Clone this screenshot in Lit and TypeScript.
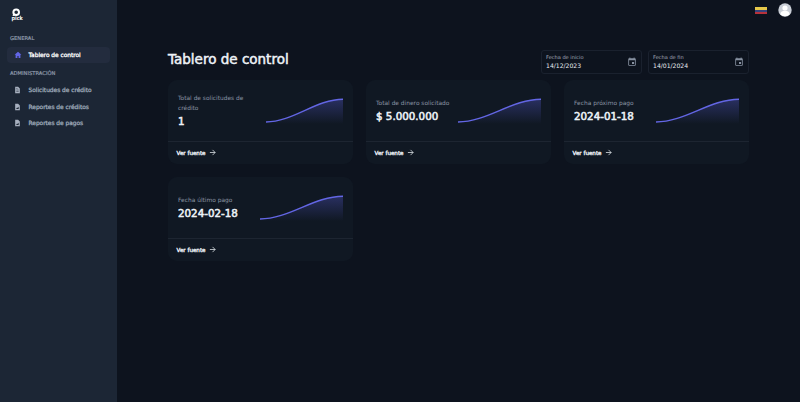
import { LitElement, html, css, svg } from "lit";
import { customElement, property } from "lit/decorators.js";

type Icon = "home" | "doc" | "report";

const icons = {
  home: svg`<path d="M12 2.200 1.800 11.600h3V21h5.400v-6.200h3.600V21h5.400v-9.400h3z"/>`,
  doc: svg`<path fill-rule="evenodd" d="M4 1h10l6 6v16H4zM8 11v2h8v-2zm0 5v2h8v-2zM8 6v2h4V6z"/>`,
  report: svg`<path fill-rule="evenodd" d="M4 1h10l6 6v16H4zM8 19h8v-8l-4 4-1.500-1L8 17z"/>`,
};

@customElement("nav-item")
export class NavItem extends LitElement {
  @property() label = "";
  @property() icon: Icon = "doc";
  @property({ type: Boolean, reflect: true }) active = false;

  static styles = css`
    :host {
      display: flex;
      align-items: center;
      box-sizing: border-box;
      height: 16px;
      padding-left: 7px;
      border-radius: 4px;
      font-size: 5.850px;
      -webkit-text-stroke: 0.300px currentColor;
      color: #9ba6b6;
    }
    :host([active]) { background: #232c3e; color: #fff; }
    svg { width: 7px; height: 8px; margin-right: 7.500px; fill: #a7b0bf; }
    :host([active]) svg { width: 8px; margin-right: 6.500px; fill: #6366e8; }
    span { white-space: nowrap; }
  `;

  render() {
    return html`<svg viewBox="0 0 24 24">${icons[this.icon]}</svg><span>${this.label}</span>`;
  }
}

@customElement("date-field")
export class DateField extends LitElement {
  @property() label = "";
  @property() value = "";

  static styles = css`
    :host {
      display: flex;
      justify-content: space-between;
      align-items: center;
      box-sizing: border-box;
      width: 101px;
      height: 24px;
      padding: 0 4px;
      border: 1px solid #1a212e;
      border-radius: 3px;
    }
    .text { padding-bottom: 2px; }
    .label { font-size: 5.050px; line-height: 8px; color: #a3acba; }
    .value { font-size: 6.100px; line-height: 9px; color: #e6eaf0; }
    svg { width: 10px; height: 10px; fill: #8791a1; }
  `;

  render() {
    return html`
      <div class="text">
        <div class="label">${this.label}</div>
        <div class="value">${this.value}</div>
      </div>
      <svg viewBox="0 0 24 24">
        <path d="M17 12h-5v5h5zM16 1v2H8V1H6v2H5c-1.100 0-2 .9-2 2v14c0 1.100.9 2 2 2h14c1.100 0 2-.9 2-2V5c0-1.100-.9-2-2-2h-1V1zm3 18H5V8h14z" />
      </svg>
    `;
  }
}

@customElement("stat-card")
export class StatCard extends LitElement {
  @property() label = "";
  @property() value = "";
  @property({ type: Number }) chart = 83;

  static styles = css`
    :host {
      display: flex;
      flex-direction: column;
      box-sizing: border-box;
      height: 84px;
      border-radius: 9px;
      background: #101823;
    }
    .body {
      display: flex;
      align-items: center;
      justify-content: space-between;
      height: 61px;
      padding: 0 10px;
    }
    .text { flex: none; max-width: 76px; padding-top: 2px; }
    .label { font-size: 5.900px; line-height: 9.300px; color: #8b95a4; }
    .value {
      margin-top: 1px;
      font-size: 10.300px;
      line-height: 15px;
      -webkit-text-stroke: 0.550px currentColor;
      color: #edf2f7;
      white-space: nowrap;
    }
    .chart { height: 26px; flex: none; }
    .foot {
      display: flex;
      align-items: center;
      flex: 1;
      padding: 0 0 1px 8.500px;
      border-top: 1px solid #1d2531;
      font-size: 5.600px;
      -webkit-text-stroke: 0.350px currentColor;
      color: #edf2f7;
    }
    .foot svg { width: 7px; height: 7px; margin-left: 3.500px; fill: none; stroke: #edf2f7; stroke-width: 2.500; }
  `;

  render() {
    return html`
      <div class="body">
        <div class="text">
          <div class="label">${this.label}</div>
          <div class="value">${this.value}</div>
        </div>
        <svg class="chart" style="width:${this.chart}px" viewBox="0 0 83 26" preserveAspectRatio="none">
          <defs>
            <linearGradient id="fill" x1="0" y1="0" x2="0" y2="1">
              <stop offset="0" stop-color="#6366f1" stop-opacity=".3" />
              <stop offset="1" stop-color="#6366f1" stop-opacity="0" />
            </linearGradient>
          </defs>
          <path d="M0 24C29 24 54 1.200 83 1.200V26H0z" fill="url(#fill)" />
          <path d="M0 24C29 24 54 1.200 83 1.200" fill="none" stroke="#6366e4" stroke-width="1.400" />
        </svg>
      </div>
      <div class="foot">
        <span>Ver fuente</span>
        <svg viewBox="0 0 24 24"><path d="M3 12h18M12 3l9 9-9 9" /></svg>
      </div>
    `;
  }
}

@customElement("app-root")
export class AppRoot extends LitElement {
  static styles = css`
    :host {
      display: flex;
      height: 402px;
      overflow: hidden;
      background: #0d131e;
      font-family: "DejaVu Sans", sans-serif;
    }
    .side {
      box-sizing: border-box;
      width: 117px;
      flex: none;
      padding: 7px 7px 0;
      background: #1c2635;
    }
    .logo { display: block; width: 17px; height: 16px; margin-left: 1px; }
    .heading {
      padding-left: 3px;
      font-size: 5.200px;
      line-height: 8px;
      -webkit-text-stroke: 0.200px currentColor;
      color: #8d98a9;
    }
    .general { margin: 11px 0 5px; }
    .admin { margin: 6px 0 5px; }
    .items { display: grid; gap: 0.700px; }
    .main { flex: 1; display: flex; flex-direction: column; }
    .top {
      display: flex;
      justify-content: flex-end;
      align-items: center;
      gap: 11px;
      height: 20px;
      padding-right: 8px;
    }
    .flag { width: 12px; height: 7px; background: linear-gradient(#e6c84a 50%, #35427c 50% 68%, #b7323b 68%); }
    .avatar { width: 14px; height: 14px; }
    .content { width: 581px; margin: 30px 0 0 51px; }
    .title-row { display: flex; justify-content: space-between; }
    h1 {
      margin: 0;
      font-size: 13.500px;
      line-height: 18px;
      font-weight: 400;
      -webkit-text-stroke: 0.500px currentColor;
      color: #edf2f7;
      white-space: nowrap;
    }
    .dates { display: flex; gap: 6px; }
    .cards { display: grid; grid-template-columns: repeat(3, 185px); gap: 13px; margin-top: 6px; }
  `;

  render() {
    return html`
      <nav class="side">
        <svg class="logo" viewBox="0 0 17 16">
          <circle cx="8.200" cy="5.300" r="2.800" fill="none" stroke="#fff" stroke-width="2" />
          <path d="M5.200 6.500 4.600 9l2.600-.2" fill="#fff" />
          <text x="3.500" y="13" font-size="5.500" font-weight="700" fill="#fff" textLength="11.300" lengthAdjust="spacingAndGlyphs">pick</text>
        </svg>
        <div class="heading general">GENERAL</div>
        <nav-item icon="home" label="Tablero de control" active></nav-item>
        <div class="heading admin">ADMINISTRACIÓN</div>
        <div class="items">
          <nav-item icon="doc" label="Solicitudes de crédito"></nav-item>
          <nav-item icon="report" label="Reportes de créditos"></nav-item>
          <nav-item icon="report" label="Reportes de pagos"></nav-item>
        </div>
      </nav>
      <div class="main">
        <div class="top">
          <div class="flag"></div>
          <svg class="avatar" viewBox="0 0 14 14">
            <circle cx="7" cy="7" r="6.700" fill="#c9ced6" />
            <circle cx="7" cy="5" r="2.600" fill="#fff" />
            <path d="M2.300 11.300c0-4.600 9.400-4.600 9.400 0-2.200 2.500-7.200 2.500-9.400 0z" fill="#fff" />
          </svg>
        </div>
        <div class="content">
          <div class="title-row">
            <h1>Tablero de control</h1>
            <div class="dates">
              <date-field label="Fecha de inicio" value="14/12/2023"></date-field>
              <date-field label="Fecha de fin" value="14/01/2024"></date-field>
            </div>
          </div>
          <div class="cards">
            <stat-card label="Total de solicitudes de crédito" value="1" chart="77"></stat-card>
            <stat-card label="Total de dinero solicitado" value="$ 5.000.000"></stat-card>
            <stat-card label="Fecha próximo pago" value="2024-01-18"></stat-card>
            <stat-card label="Fecha último pago" value="2024-02-18"></stat-card>
          </div>
        </div>
      </div>
    `;
  }
}
